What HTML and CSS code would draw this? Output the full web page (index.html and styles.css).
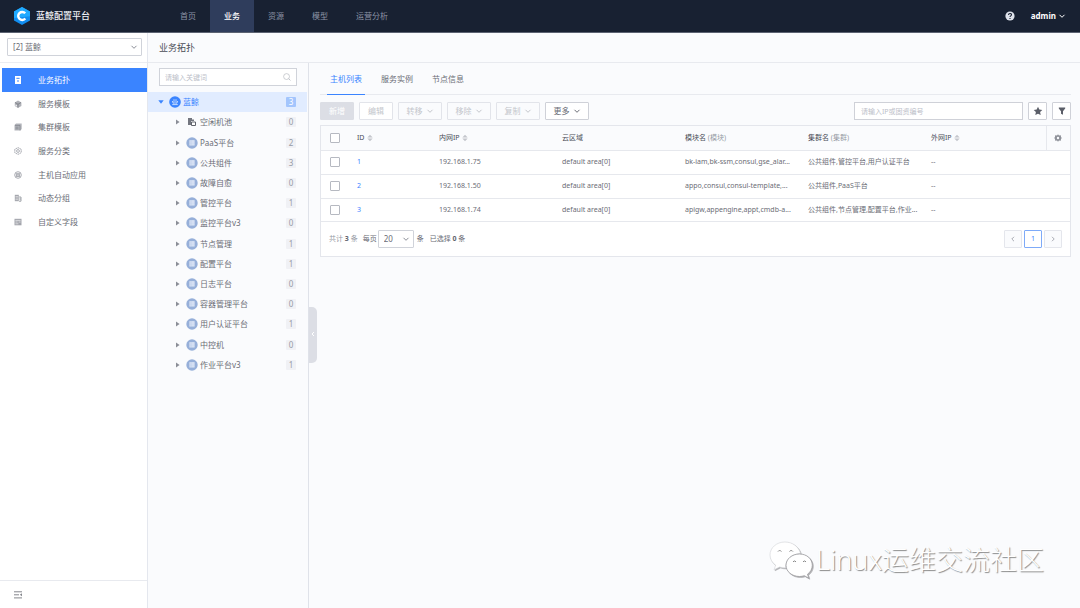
FILE: index.html
```html
<!DOCTYPE html>
<html lang="zh-CN">
<head>
<meta charset="utf-8">
<title>蓝鲸配置平台</title>
<link rel="stylesheet" href="styles.css">
</head>
<body>
<svg class="defs" width="0" height="0" aria-hidden="true">
  <symbol id="chevron" viewBox="0 0 8 8"><path d="M1.5 2.8 4 5.3 6.5 2.8" fill="none" stroke="currentColor" stroke-width="1"/></symbol>
  <symbol id="caret" viewBox="0 0 6 6"><path d="M1 .5v5L4.600 3z" fill="#8b8e97"/></symbol>
  <symbol id="set" viewBox="0 0 12 12"><circle cx="6" cy="6" r="5.7" fill="#96afd9"/><path d="M3.400 3.200h5.200v5.300H3.400z" fill="#dfe8f7"/><path d="M3.400 5h5.200M3.400 6.900h5.200M5 3.200v5.300" stroke="#b4c7e7" stroke-width=".5"/></symbol>
  <symbol id="sort" viewBox="0 0 6 8"><path d="M3 .8 5.700 3.400H.3zM3 7.200.3 4.600h5.400z" fill="#c4c6cc"/></symbol>
</svg>

<header class="header">
  <a class="brand" href="#">
    <svg width="18" height="20" viewBox="0 0 18 20"><path d="M9 1 17 5.400v9.200L9 19 1 14.600V5.400z" fill="#118df0"/><path d="M9 1 17 5.400v4.800L1 12V5.400z" fill="#20aaff"/><path d="M12.200 7.300a4 4 0 1 0 .1 5.200" fill="none" stroke="#fff" stroke-width="2.400"/></svg>
    <span>蓝鲸配置平台</span>
  </a>
  <nav class="topnav">
    <a href="#">首页</a><a href="#" class="current">业务</a><a href="#">资源</a><a href="#">模型</a><a href="#">运营分析</a>
  </nav>
  <div class="account">
    <button class="plain" aria-label="帮助"><svg width="10" height="10" viewBox="0 0 10 10"><circle cx="5" cy="5" r="4.600" fill="#dfe3ec"/><path d="M3.500 4c0-2 3-2 3-.2 0 1.200-1.500 1-1.500 2.200M5 7v1" fill="none" stroke="#182132" stroke-width="1.100"/></svg></button>
    <button class="plain user">admin <svg width="8" height="8"><use href="#chevron"/></svg></button>
  </div>
</header>

<div class="body">
  <aside class="sidebar">
    <div class="biz">
      <div class="select-box">
        <select aria-label="业务"><option>[2] 蓝鲸</option></select>
        <svg width="8" height="8"><use href="#chevron"/></svg>
      </div>
    </div>
    <nav class="sidenav">
      <a href="#" class="current"><svg width="8" height="10" viewBox="0 0 8 10"><path d="M1 1h6v8H1z" fill="#fff"/><path d="M2.400 3.300h3.200M3 6h2" stroke="#3a84ff"/></svg>业务拓扑</a>
      <a href="#"><svg width="8" height="8" viewBox="0 0 8 8"><path d="M4 .5 7.400 2.400v3.700L4 8 .8 6V2.400z" fill="#b0b2b8"/><path d="M1 2.500 4 4.200l3-1.700M4 4v3.500" stroke="#777a82" stroke-width=".8" fill="none"/><path d="M1.500 5.300 3 6" stroke="#fff"/></svg>服务模板</a>
      <a href="#"><svg width="8" height="8" viewBox="0 0 8 8"><path d="M2 .5h5.700V6L6.500 7.500H.5V2z" fill="#b3b5bb"/><path d="M1 2.400h5v5M1.500 4.200h3M1.500 5.800h3" stroke="#7e8189" stroke-width=".7" fill="none"/></svg>集群模板</a>
      <a href="#"><svg width="8" height="8" viewBox="0 0 8 8"><path d="M4 .6 7.200 2.300v3.400L4 7.400.8 5.700V2.300z" fill="none" stroke="#a0a3aa" stroke-width=".9" stroke-dasharray="1.8 .5"/><circle cx="4" cy="4" r="1.4" fill="none" stroke="#999ca4" stroke-width=".8"/></svg>服务分类</a>
      <a href="#"><svg width="8" height="8" viewBox="0 0 8 8"><circle cx="4" cy="4" r="3.3" fill="none" stroke="#a0a3aa" stroke-width=".9"/><path d="m4 2 1.8 3.500H2.200zM2.200 2l1 3M5.800 2l-1 3" fill="none" stroke="#8a8d95" stroke-width=".7"/></svg>主机自动应用</a>
      <a href="#"><svg width="8" height="8" viewBox="0 0 8 8"><path d="M.8.8h4v6.400h-4z" fill="#a5a7ae"/><path d="M1.500 2.500h2.700M1.500 4h2.700M1.500 5.600h2.700" stroke="#eee" stroke-width=".6"/><path d="M5 3h2v4.200H5M5.300 5H7" stroke="#8c8f97" fill="none" stroke-width=".8"/></svg>动态分组</a>
      <a href="#"><svg width="8" height="8" viewBox="0 0 8 8"><path d="M.5.8h7v6.500h-7z" fill="#a3a5ac"/><path d="M1.400 2.400h5.200M1.400 4h2.200m1 0h2M1.400 5.800h3" stroke="#f0f0f2" stroke-width=".7"/></svg>自定义字段</a>
    </nav>
    <div class="fold">
      <button class="plain" aria-label="收起导航"><svg width="8" height="8" viewBox="0 0 8 8"><path d="M0 .8h8M0 3.800h5M0 6.900h8" stroke="#85878d" stroke-width="1"/><path d="M8 2.300v3L5.800 3.800z" fill="#85878d"/></svg></button>
    </div>
  </aside>

  <div class="page">
    <h1>业务拓扑</h1>
    <div class="split">
      <section class="topology">
        <div class="tree-search">
          <input type="text" aria-label="关键词" placeholder="请输入关键词">
          <svg width="8" height="8" viewBox="0 0 9 9"><circle cx="4" cy="4" r="3.3" fill="none" stroke="#b8bbc3" stroke-width=".8"/><path d="m6.400 6.400 2 2" stroke="#b8bbc3"/></svg>
        </div>
        <ul class="tree">
          <li class="root"><svg class="caret" width="6" height="6" viewBox="0 0 6 6"><path d="M.3 1.200h5.400L3 4.800z" fill="#3a84ff"/></svg><svg width="12" height="12" viewBox="0 0 12 12"><circle cx="6" cy="6" r="5.8" fill="#3a84ff"/><path d="M3.200 8.600h5.600M5 3.200v5.300M7 3.200v5.300M3.300 5l.9 2.300M8.700 5l-.9 2.300" stroke="#dceaff" fill="none" stroke-width=".8"/></svg><span>蓝鲸</span><em>3</em></li>
          <li><svg class="caret" width="6" height="6"><use href="#caret"/></svg><svg width="12" height="12" viewBox="0 0 12 12"><path d="M2 2h4v1.500h2V5H5v4H2z" fill="#73767f"/><path d="M5.500 6h4v3.500h-4z" fill="#fff" stroke="#5f626b"/></svg><span>空闲机池</span><em>0</em></li>
          <li><svg class="caret" width="6" height="6"><use href="#caret"/></svg><svg width="12" height="12"><use href="#set"/></svg><span>PaaS平台</span><em>2</em></li>
          <li><svg class="caret" width="6" height="6"><use href="#caret"/></svg><svg width="12" height="12"><use href="#set"/></svg><span>公共组件</span><em>3</em></li>
          <li><svg class="caret" width="6" height="6"><use href="#caret"/></svg><svg width="12" height="12"><use href="#set"/></svg><span>故障自愈</span><em>0</em></li>
          <li><svg class="caret" width="6" height="6"><use href="#caret"/></svg><svg width="12" height="12"><use href="#set"/></svg><span>管控平台</span><em>1</em></li>
          <li><svg class="caret" width="6" height="6"><use href="#caret"/></svg><svg width="12" height="12"><use href="#set"/></svg><span>监控平台v3</span><em>0</em></li>
          <li><svg class="caret" width="6" height="6"><use href="#caret"/></svg><svg width="12" height="12"><use href="#set"/></svg><span>节点管理</span><em>1</em></li>
          <li><svg class="caret" width="6" height="6"><use href="#caret"/></svg><svg width="12" height="12"><use href="#set"/></svg><span>配置平台</span><em>1</em></li>
          <li><svg class="caret" width="6" height="6"><use href="#caret"/></svg><svg width="12" height="12"><use href="#set"/></svg><span>日志平台</span><em>0</em></li>
          <li><svg class="caret" width="6" height="6"><use href="#caret"/></svg><svg width="12" height="12"><use href="#set"/></svg><span>容器管理平台</span><em>0</em></li>
          <li><svg class="caret" width="6" height="6"><use href="#caret"/></svg><svg width="12" height="12"><use href="#set"/></svg><span>用户认证平台</span><em>1</em></li>
          <li><svg class="caret" width="6" height="6"><use href="#caret"/></svg><svg width="12" height="12"><use href="#set"/></svg><span>中控机</span><em>0</em></li>
          <li><svg class="caret" width="6" height="6"><use href="#caret"/></svg><svg width="12" height="12"><use href="#set"/></svg><span>作业平台v3</span><em>1</em></li>
        </ul>
        <button class="handle" aria-label="收起"><svg width="8" height="8" viewBox="0 0 8 8"><path d="M5 2 3 4l2 2" fill="none" stroke="#fff"/></svg></button>
      </section>

      <main class="hosts">
        <div class="tabs">
          <a href="#" class="current">主机列表</a><a href="#">服务实例</a><a href="#">节点信息</a>
        </div>
        <div class="toolbar">
          <button class="btn solid">新增</button>
          <button class="btn faint">编辑</button>
          <button class="btn drop off">转移 <svg width="8" height="8"><use href="#chevron"/></svg></button>
          <button class="btn drop off">移除 <svg width="8" height="8"><use href="#chevron"/></svg></button>
          <button class="btn drop off">复制 <svg width="8" height="8"><use href="#chevron"/></svg></button>
          <button class="btn drop">更多 <svg width="8" height="8"><use href="#chevron"/></svg></button>
          <input class="ip-search" type="text" aria-label="IP或固资编号" placeholder="请输入IP或固资编号">
          <button class="btn square" aria-label="收藏"><svg width="10" height="10" viewBox="0 0 10 10"><path d="m5 .8 1.300 2.800 3 .4-2.200 2.100.6 3L5 7.700 2.300 9.100l.6-3L.7 4l3-.4z" fill="#5b5e68"/></svg></button>
          <button class="btn square" aria-label="筛选"><svg width="10" height="10" viewBox="0 0 10 10"><path d="M1.800 1.500h6.400v1L6 5.300v3.500L4 7.700V5.300L1.800 2.500z" fill="#5b5e68"/></svg></button>
        </div>
        <div class="card">
          <table>
            <colgroup><col class="c-check"><col class="c-id"><col><col><col><col><col><col class="c-gear"></colgroup>
            <thead>
              <tr><th class="check"><input type="checkbox" aria-label="全选"></th><th>ID <svg width="6" height="8"><use href="#sort"/></svg></th><th>内网IP <svg width="6" height="8"><use href="#sort"/></svg></th><th>云区域</th><th>模块名 <small>(模块)</small></th><th>集群名 <small>(集群)</small></th><th>外网IP <svg width="6" height="8"><use href="#sort"/></svg></th><th class="gear"><button class="plain" aria-label="列设置"><svg width="8" height="8" viewBox="0 0 8 8"><path d="M4 .3 5 1.400l1.800-.1.2 1.800L7.800 4 7 4.900l-.2 1.800L5 6.600 4 7.700 3 6.600l-1.800.1L1 4.900.2 4 1 3.100l.2-1.800 1.800.1z" fill="#8f929a"/><circle cx="4" cy="4" r="1.2" fill="#fafbfd"/></svg></button></th></tr>
            </thead>
            <tbody>
              <tr><td class="check"><input type="checkbox" aria-label="选择 1"></td><td><a href="#">1</a></td><td>192.168.1.75</td><td>default area[0]</td><td>bk-iam,bk-ssm,consul,gse_alar...</td><td>公共组件,管控平台,用户认证平台</td><td colspan="2">--</td></tr>
              <tr><td class="check"><input type="checkbox" aria-label="选择 2"></td><td><a href="#">2</a></td><td>192.168.1.50</td><td>default area[0]</td><td>appo,consul,consul-template,...</td><td>公共组件,PaaS平台</td><td colspan="2">--</td></tr>
              <tr><td class="check"><input type="checkbox" aria-label="选择 3"></td><td><a href="#">3</a></td><td>192.168.1.74</td><td>default area[0]</td><td>apigw,appengine,appt,cmdb-a...</td><td>公共组件,节点管理,配置平台,作业...</td><td colspan="2">--</td></tr>
            </tbody>
          </table>
          <div class="pager">
            <span class="total">共计 <b>3</b> 条</span>
            <label for="size">每页</label>
            <div class="select-box size">
              <select id="size"><option>20</option></select>
              <svg width="8" height="8"><use href="#chevron"/></svg>
            </div>
            <span class="unit">条</span>
            <span>已选择 <b>0</b> 条</span>
            <div class="pages">
              <button aria-label="上一页"><svg width="8" height="8" viewBox="0 0 8 8"><path d="M5 1.800 2.800 4 5 6.200" fill="none" stroke="currentColor" stroke-width=".9"/></svg></button>
              <button class="current">1</button>
              <button aria-label="下一页"><svg width="8" height="8" viewBox="0 0 8 8"><path d="M3 1.800 5.200 4 3 6.200" fill="none" stroke="currentColor" stroke-width=".9"/></svg></button>
            </div>
          </div>
        </div>
      </main>
    </div>
  </div>
</div>

<div class="watermark">
  <svg width="44" height="38" viewBox="0 0 44 38"><path d="M16 1C7.500 1 1 6.800 1 14c0 4.200 2.200 7.700 5.700 10.200L5 28.800l5.600-2.800c2 .6 4 .9 6.200.9C16 19.500 22 13 31.500 12.500 30 5.800 23.500 1 16 1z" fill="#fff" stroke="#d2d3d6" stroke-width=".6"/><path d="M30.500 13C23 13 17 18 17 24.300S23 35.500 30.500 35.500c1.700 0 3.300-.3 4.800-.8l4.500 2.500-1.300-4c3-2.100 4.800-5.300 4.800-8.900C43.300 18 38 13 30.500 13z" fill="#fff" stroke="#9a9b9e" stroke-width=".8"/><path d="M9 10.500a2 2 0 0 1 3.400 0M20.500 10.500a2 2 0 0 1 3.400 0M24 20.800a2 2 0 0 1 3 0M34 20.800a2 2 0 0 1 3 0" fill="none" stroke="#8a8a8a"/></svg>
  <span>Linux运维交流社区</span>
</div>
</body>
</html>
```
FILE: styles.css
```css
* { box-sizing: border-box; }
body {
  margin: 0;
  min-height: 100vh;
  display: flex;
  flex-direction: column;
  position: relative;
  background: #fafbfd;
  color: #6b6d76;
  font: 8px/12px "Noto Sans", "Noto Sans CJK SC", sans-serif;
}
a { color: inherit; text-decoration: none; }
button, input, select { font: inherit; color: inherit; margin: 0; }
svg { flex: none; }
.defs { position: absolute; }
.plain { border: 0; background: none; padding: 0; display: flex; align-items: center; }

.header {
  display: flex;
  align-items: stretch;
  height: 33px;
  padding: 0 14px 0 13px;
  background: #182132;
  border-bottom: 1px solid #5c6372;
  color: #8c94a5;
}
.brand {
  display: flex;
  align-items: center;
  gap: 5px;
  width: 153px;
  color: #f0f2f6;
  font-size: 9px;
  font-weight: 500;
}
.topnav { display: flex; flex: 1; }
.topnav a { display: flex; align-items: center; padding: 0 14px; }
.topnav .current { background: #2f3d5c; color: #fff; font-weight: 500; }
.account { display: flex; align-items: center; gap: 16px; }
.user { color: #fff; font-weight: 700; gap: 2px; }

.body { display: flex; flex: 1; }
.sidebar {
  display: flex;
  flex-direction: column;
  width: 148px;
  flex: none;
  background: #fff;
  border-right: 1px solid #e4e7ee;
}
.biz { height: 30px; padding: 5px 5px 6px 7px; border-bottom: 1px solid #ebedf2; }
.select-box { position: relative; display: flex; height: 18px; }
.select-box select {
  appearance: none;
  width: 100%;
  padding: 0 16px 0 5px;
  border: 1px solid #d0d3da;
  border-radius: 1px;
  background: #fff;
}
.select-box svg { position: absolute; right: 4px; top: 5px; color: #8b8e97; pointer-events: none; }
.sidenav { display: grid; grid-auto-rows: 1fr; height: 166px; margin: 5px 0 0 2px; }
.sidenav a { display: grid; grid-template-columns: 8px 1fr; gap: 16px; align-items: center; padding-left: 12px; }
.sidenav .current { background: #3a84ff; color: #fff; }
.fold { margin-top: auto; height: 28px; padding: 10px 14px; border-top: 1px solid #e8eaef; }

.page { flex: 1; min-width: 0; display: flex; flex-direction: column; }
h1 {
  margin: 0;
  height: 30px;
  padding-left: 11px;
  border-bottom: 1px solid #e8eaef;
  font-size: 9px;
  font-weight: 400;
  line-height: 29px;
  color: #4a4d57;
}
.split { display: flex; flex: 1; }
.topology { position: relative; width: 161px; flex: none; border-right: 1px solid #dfe2e9; }
.tree-search { position: relative; margin: 5px 11px 6px; }
.tree-search input { display: block; width: 100%; height: 18px; padding: 0 18px 0 5px; font-size: 7px; border: 1px solid #d0d3da; background: #fff; }
.tree-search svg { position: absolute; right: 6px; top: 5px; }
::placeholder { color: #bcc0c9; opacity: 1; }
.tree { list-style: none; margin: 0; padding: 0; display: grid; grid-auto-rows: 1fr; height: 283px; }
.tree li { display: flex; align-items: center; gap: 2px; padding: 0 12px 0 27px; }
.tree .root { padding-left: 10px; margin-right: 1px; padding-right: 11px; background: #e1ecff; color: #3a84ff; }
.caret { margin-right: 3px; }
.tree li span { flex: 1; }
.tree em { min-width: 10px; font-style: normal; line-height: 10px; text-align: center; background: #f0f1f5; color: #979ba5; border-radius: 1px; }
.tree .root em { background: #a3c5fd; color: #fff; }
.handle {
  position: absolute;
  left: 161px;
  top: 244px;
  width: 8px;
  height: 56px;
  padding: 0;
  border: 0;
  border-radius: 0 5px 5px 0;
  background: #dcdee5;
}

.hosts { flex: 1; min-width: 0; padding: 0 9px 0 11px; }
.tabs { display: flex; gap: 13px; height: 32px; padding-left: 7px; border-bottom: 1px solid #e8eaef; }
.tabs a { padding: 0 3px; line-height: 32px; height: 32px; }
.tabs .current { color: #3a84ff; border-bottom: 1px solid #3a84ff; }
.toolbar { display: flex; gap: 5px; margin: 7px 0 5px; }
.btn {
  display: flex;
  align-items: center;
  justify-content: center;
  gap: 3px;
  width: 34px;
  height: 18px;
  padding: 0;
  border: 1px solid #cfd1d8;
  border-radius: 1px;
  background: #fff;
}
.drop { width: 44px; }
.faint, .off { border-color: #e2e4ea; color: #c4c6cc; }
.off { background: #fafbfd; }
.solid { background: #dcdee5; border-color: #dcdee5; color: #fff; }
.square { width: 19px; }
.ip-search { width: 169px; height: 18px; margin-left: auto; padding: 0 6px; font-size: 7px; border: 1px solid #cfd1d8; background: #fff; }

.card { border: 1px solid #e4e6ec; background: #fff; font-size: 7px; }
table { width: 100%; table-layout: fixed; border-collapse: collapse; }
.c-check { width: 28px; }
.c-id { width: 82px; }
.c-gear { width: 24px; }
th, td { padding: 0 8px; border-bottom: 1px solid #e6e8ed; text-align: left; font-weight: 400; white-space: nowrap; }
th { height: 24px; background: #fafbfd; color: #4a4d57; }
td { height: 24px; }
tbody tr:last-child td { height: 23px; }
th svg { vertical-align: middle; margin-left: 1px; }
th small { font-size: 7px; color: #979ba5; }
td a { color: #3a84ff; }
.check { padding: 0 0 0 9px; }
.gear { padding: 0 7px; border-left: 1px solid #e6e8ed; }
.gear svg { margin: 0; }
input[type="checkbox"] { appearance: none; display: block; width: 10px; height: 10px; border: 1px solid #b6b9c1; border-radius: 1px; background: #fff; }
.pager { display: flex; align-items: center; height: 34px; padding: 0 8px; }
.total { color: #979ba5; margin-right: 5px; }
.pager b { color: #63656e; }
.size { width: 36px; margin: 0 3px 0 1px; font-size: 8px; }
.unit { margin-right: 6px; }
.pages { display: flex; gap: 2px; margin-left: auto; }
.pages button { display: grid; place-items: center; width: 18px; height: 18px; padding: 0; border: 1px solid #e4e6ec; border-radius: 1px; background: #fafbfd; color: #a0a3ab; }
.pages .current { border-color: #7eaaf8; background: #fff; color: #3a84ff; }

.watermark {
  position: absolute;
  right: 36px;
  bottom: 29px;
  display: flex;
  align-items: center;
  gap: 3px;
  color: #fff;
  font-size: 27px;
  font-weight: 300;
  line-height: 38px;
  text-shadow: 1px 1px 1px #888;
  pointer-events: none;
}
.watermark svg { filter: drop-shadow(1px 1px 0 #b0b0b3); }
```
